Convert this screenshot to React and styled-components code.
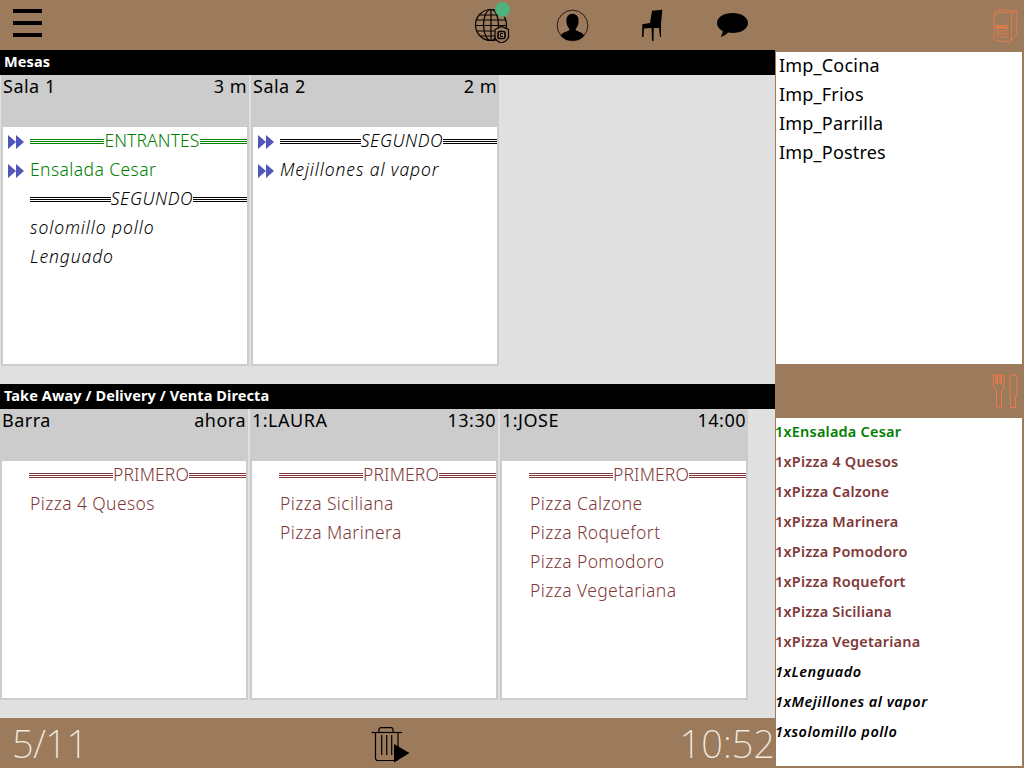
import React from 'react';
import styled, { createGlobalStyle } from 'styled-components';

const BROWN = '#9c7a5c';
const ORANGE = '#f07a45';
const GREEN = '#008000';
const MAROON = '#803838';

const GlobalStyle = createGlobalStyle`
  html, body { margin: 0; padding: 0; background: ${BROWN}; }
  body { font-family: "Noto Sans", "Open Sans", sans-serif; }
`;

const Screen = styled.div`
  width: 1024px;
  height: 768px;
  display: grid;
  grid-template-columns: 775px 249px;
  overflow: hidden;
`;

const Main = styled.div`
  display: flex;
  flex-direction: column;
  height: 768px;
  background: #e0e0e0;
`;

const TopBar = styled.div`
  height: 50px;
  flex: none;
  background: ${BROWN};
  display: flex;
  align-items: center;
  justify-content: space-between;
  padding: 0 3px 0 13px;
`;

const Burger = styled.div`
  width: 29px;
  display: flex;
  flex-direction: column;
  gap: 8px;
  margin-top: -4px;
  span { height: 4px; background: #000; display: block; }
`;

const Nav = styled.div`
  display: flex;
`;

const NavSlot = styled.div`
  width: 80px;
  height: 50px;
  display: flex;
  align-items: center;
  justify-content: center;
  position: relative;
`;

const Dot = styled.span`
  position: absolute;
  top: 2px;
  left: 43px;
  width: 15px;
  height: 15px;
  border-radius: 50%;
  background: #4fb27c;
`;

const Heading = styled.div`
  height: 25px;
  flex: none;
  background: #000;
  color: #fff;
  font-size: 14.5px;
  font-weight: 700;
  letter-spacing: 0.1px;
  line-height: 23px;
  padding-left: 4px;
`;

const Row = styled.div`
  display: flex;
  gap: 2px;
  height: ${p => p.$height}px;
  flex: none;
  padding-left: ${p => p.$inset}px;
`;

const Gap = styled.div`
  flex: none;
  height: 18px;
`;

const Card = styled.div`
  width: 248px;
  box-sizing: border-box;
  border: 2px solid #ccc;
  border-top: 0;
  background: #fff;
  display: flex;
  flex-direction: column;
`;

const CardHead = styled.div`
  height: 52px;
  flex: none;
  margin: 0 -2px;
  padding: 0 2px 0 2px;
  background: #ccc;
  color: #000;
  display: flex;
  justify-content: space-between;
  font-size: 18px;
  letter-spacing: 0.5px;
  line-height: 23px;
`;

const Lines = styled.div`
  margin-top: -2px;
`;

const spacing = p => {
  if (p.$rule) return p.$italic ? 0.6 : 0.1;
  return p.$italic ? 0.9 : 0.4;
};

const Line = styled.div`
  height: 29px;
  display: flex;
  align-items: center;
  padding-left: ${p => p.$indent}px;
  position: relative;
  font-size: 17.5px;
  font-weight: 300;
  letter-spacing: ${spacing}px;
  color: ${p => p.$color};
  font-style: ${p => (p.$italic ? 'italic' : 'normal')};
`;

const Rule = styled.span`
  flex: 1 1 ${p => p.$basis}px;
  box-sizing: border-box;
  height: 5px;
  position: relative;
  top: 2px;
  border-top: 1px solid ${p => p.$color};
  border-bottom: 1px solid ${p => p.$color};
  &::after {
    content: '';
    display: block;
    height: 1px;
    margin-top: 1px;
    background: ${p => p.$color};
  }
`;

const Arrow = styled.svg`
  position: absolute;
  left: 5px;
  top: 10px;
`;

const Side = styled.div`
  background: ${BROWN};
  display: flex;
  flex-direction: column;
  height: 768px;
  padding: 0 2px 2px 1px;
  box-sizing: border-box;
`;

const SideHead = styled.div`
  height: ${p => p.$height}px;
  flex: none;
  display: flex;
  align-items: center;
  justify-content: flex-end;
  padding-right: 4px;
`;

const Panel = styled.div`
  background: #fff;
  flex: ${p => (p.$fill ? 1 : 'none')};
  height: ${p => p.$height}px;
`;

const Printer = styled.div`
  height: 29px;
  line-height: 26px;
  padding-left: 3px;
  font-size: 18px;
  letter-spacing: 0.2px;
  color: #000;
`;

const Order = styled.div`
  height: 30px;
  line-height: 26px;
  margin-left: -1px;
  font-size: 14.5px;
  font-weight: 600;
  letter-spacing: ${p => (p.$italic ? 0.5 : 0.2)}px;
  color: ${p => p.$color};
  font-style: ${p => (p.$italic ? 'italic' : 'normal')};
`;

const Footer = styled.div`
  height: 50px;
  margin-top: auto;
  flex: none;
  background: ${BROWN};
  display: flex;
  align-items: center;
  justify-content: space-between;
`;

const Big = styled.div`
  width: 200px;
  font-size: 38px;
  font-weight: 200;
  line-height: 48px;
  color: #f2ebe0;
  padding-left: ${p => (p.$right ? 0 : 12)}px;
  letter-spacing: ${p => (p.$right ? 0 : -0.5)}px;
  text-align: ${p => (p.$right ? 'right' : 'left')};
  box-sizing: border-box;
`;

const Bin = styled.div`
  margin: 4px 0 0 7px;
  height: 36px;
`;

const Trash = () => (
  <svg width="40" height="36" viewBox="0 0 40 36">
    <g fill="none" stroke="#000" strokeWidth="1.200">
      <path d="M.5 5.500H31" />
      <path d="M8 5V2.500Q8 .6 10 .6H20Q22 .6 22 2.500V5" />
      <path d="M4.500 6V31q0 2.500 2.500 2.500h17.500q2.500 0 2.500-2.500V6" />
      <path d="M10.700 8v20M15.700 8v20M20.700 8v20" />
    </g>
    <path d="M23 17l15.500 9L23 35.500z" fill="#000" />
  </svg>
);

const Globe = () => (
  <svg width="36" height="36" viewBox="0 0 36 36">
    <g fill="none" stroke="#000" strokeWidth="1.200">
      <circle cx="17" cy="18" r="15.500" />
      <ellipse cx="17" cy="18" rx="7.500" ry="15.500" />
      <path d="M17 2.500v31M2 13h30M2 18.500h30M3 24h28M6 8h22M6 29h22" />
    </g>
    <path d="M21 22.500l6.500-3 7 3v8q-2 4-7 5.500q-5-1.500-6.500-5.500z" fill={BROWN} stroke="#000" strokeWidth="1.200" />
    <rect x="24" y="24.500" width="7" height="7" rx="1.500" fill="none" stroke="#000" strokeWidth="1.600" />
    <path d="M29 26.500h-2.500v3h2.500" fill="none" stroke="#000" strokeWidth="1" />
  </svg>
);

const User = () => (
  <svg width="33" height="33" viewBox="0 0 34 34">
    <circle cx="17" cy="17" r="15.800" fill="none" stroke="#000" strokeWidth="0.800" />
    <path d="M17 5c4 0 6.300 3 6.300 7 0 3-1 6-2.800 8-.7 1 0 2 1 2.500 3 1.300 6 2 7.700 5A15.600 15.600 0 0 1 17 32.500 15.600 15.600 0 0 1 4.800 27.500c1.700-3 4.700-3.700 7.700-5 1-.5 1.700-1.500 1-2.500-1.800-2-2.800-5-2.800-8 0-4 2.300-7 6.300-7z" fill="#000" />
  </svg>
);

const Chair = () => (
  <svg width="24" height="34" viewBox="0 0 24 34">
    <path d="M12 2.700L22.300 1.700 21 16V29H20L19 20H13.800L13.500 33H12L11.500 20 4 20.500 3.500 29H2L2.300 16.300 10 15z" fill="#000" />
  </svg>
);

const Chat = () => (
  <svg width="33" height="26" viewBox="0 0 33 26">
    <path d="M16.500 1C25 1 32 5 32 11s-7 10-15.500 10c-1.500 0-3-.1-4.300-.4C10 22.800 7.500 24.300 4.500 25c1.300-1.800 2-3.500 2.300-6C3 17 1 14.500 1 11 1 5 8 1 16.500 1z" fill="#000" />
  </svg>
);

const PrinterIcon = () => (
  <svg width="25" height="35" viewBox="0 0 25 35">
    <g fill="none" stroke={ORANGE} strokeWidth="0.800">
      <path d="M1 31V6Q1 1 6 .5L24 2 23.500 25 17 33.500 1.500 31" />
      <path d="M18.500 3.500V33M18.500 3.500L24 2M18.500 3.500L6 3Q2.500 3.500 2 8" />
      <path d="M1.500 16.500H15M4 19l1 9h8l1-9M5.500 22h7M5.500 24.500h7" />
      <path d="M3 18.500h11" strokeWidth="2" />
    </g>
  </svg>
);

const Cutlery = () => (
  <svg width="25" height="35" viewBox="0 0 25 35">
    <g fill="none" stroke={ORANGE} strokeWidth="1">
      <path d="M.5 1H3v9h1.500V1H7v9h1.500V1H11v10.500Q11 16 8.500 17V33H3.500V17Q.5 16 .5 11.500z" />
      <path d="M18.500 1h3.500q2 0 2 2v19.500h-1.500V33.500h-5V22.500H17V3q0-2 1.500-2z" />
    </g>
  </svg>
);

const Skip = () => (
  <Arrow width="16" height="14" viewBox="0 0 16 14">
    <path d="M0 0l8 7-8 7zM8 0l8 7-8 7z" fill="#5157b8" />
  </Arrow>
);

const TicketLine = ({ text, color, italic, rule, skip, indent = 27 }) => (
  <Line $color={color} $italic={italic} $rule={rule} $indent={indent}>
    {skip && <Skip />}
    {rule ? (
      <>
        <Rule $color={color} $basis={27} />
        {text}
        <Rule $color={color} $basis={0} />
      </>
    ) : (
      text
    )}
  </Line>
);

const Ticket = ({ name, time, lines }) => (
  <Card>
    <CardHead>
      <span>{name}</span>
      <span>{time}</span>
    </CardHead>
    <Lines>
      {lines.map(l => (
        <TicketLine key={l.text} {...l} />
      ))}
    </Lines>
  </Card>
);

const tables = [
  {
    name: 'Sala 1',
    time: '3 m',
    lines: [
      { text: 'ENTRANTES', color: GREEN, rule: true, skip: true },
      { text: 'Ensalada Cesar', color: GREEN, skip: true },
      { text: 'SEGUNDO', color: '#000', italic: true, rule: true },
      { text: 'solomillo pollo', color: '#000', italic: true },
      { text: 'Lenguado', color: '#000', italic: true },
    ],
  },
  {
    name: 'Sala 2',
    time: '2 m',
    lines: [
      { text: 'SEGUNDO', color: '#000', italic: true, rule: true, skip: true },
      { text: 'Mejillones al vapor', color: '#000', italic: true, skip: true },
    ],
  },
];

const primero = { text: 'PRIMERO', color: MAROON, rule: true };
const pizza = text => ({ text, color: MAROON, indent: 28 });

const takeAway = [
  { name: 'Barra', time: 'ahora', lines: [primero, pizza('Pizza 4 Quesos')] },
  { name: '1:LAURA', time: '13:30', lines: [primero, pizza('Pizza Siciliana'), pizza('Pizza Marinera')] },
  {
    name: '1:JOSE',
    time: '14:00',
    lines: [primero, pizza('Pizza Calzone'), pizza('Pizza Roquefort'), pizza('Pizza Pomodoro'), pizza('Pizza Vegetariana')],
  },
];

const printers = ['Imp_Cocina', 'Imp_Frios', 'Imp_Parrilla', 'Imp_Postres'];

const orders = [
  { text: '1xEnsalada Cesar', color: GREEN },
  { text: '1xPizza 4 Quesos', color: MAROON },
  { text: '1xPizza Calzone', color: MAROON },
  { text: '1xPizza Marinera', color: MAROON },
  { text: '1xPizza Pomodoro', color: MAROON },
  { text: '1xPizza Roquefort', color: MAROON },
  { text: '1xPizza Siciliana', color: MAROON },
  { text: '1xPizza Vegetariana', color: MAROON },
  { text: '1xLenguado', color: '#000', italic: true },
  { text: '1xMejillones al vapor', color: '#000', italic: true },
  { text: '1xsolomillo pollo', color: '#000', italic: true },
];

export default function App() {
  return (
    <Screen>
      <GlobalStyle />
      <Main>
        <TopBar>
          <Burger>
            <span />
            <span />
            <span />
          </Burger>
          <Nav>
            <NavSlot>
              <Globe />
              <Dot />
            </NavSlot>
            <NavSlot>
              <User />
            </NavSlot>
            <NavSlot>
              <Chair />
            </NavSlot>
            <NavSlot>
              <Chat />
            </NavSlot>
          </Nav>
        </TopBar>
        <Heading>Mesas</Heading>
        <Row $height={291} $inset={1}>
          {tables.map(t => (
            <Ticket key={t.name} {...t} />
          ))}
        </Row>
        <Gap />
        <Heading>Take Away / Delivery / Venta Directa</Heading>
        <Row $height={291} $inset={0}>
          {takeAway.map(t => (
            <Ticket key={t.name} {...t} />
          ))}
        </Row>
        <Footer>
          <Big>5/11</Big>
          <Bin>
            <Trash />
          </Bin>
          <Big $right>10:52</Big>
        </Footer>
      </Main>
      <Side>
        <SideHead $height={52}>
          <PrinterIcon />
        </SideHead>
        <Panel $height={312}>
          {printers.map(p => (
            <Printer key={p}>{p}</Printer>
          ))}
        </Panel>
        <SideHead $height={54}>
          <Cutlery />
        </SideHead>
        <Panel $fill>
          {orders.map(o => (
            <Order key={o.text} $color={o.color} $italic={o.italic}>
              {o.text}
            </Order>
          ))}
        </Panel>
      </Side>
    </Screen>
  );
}
